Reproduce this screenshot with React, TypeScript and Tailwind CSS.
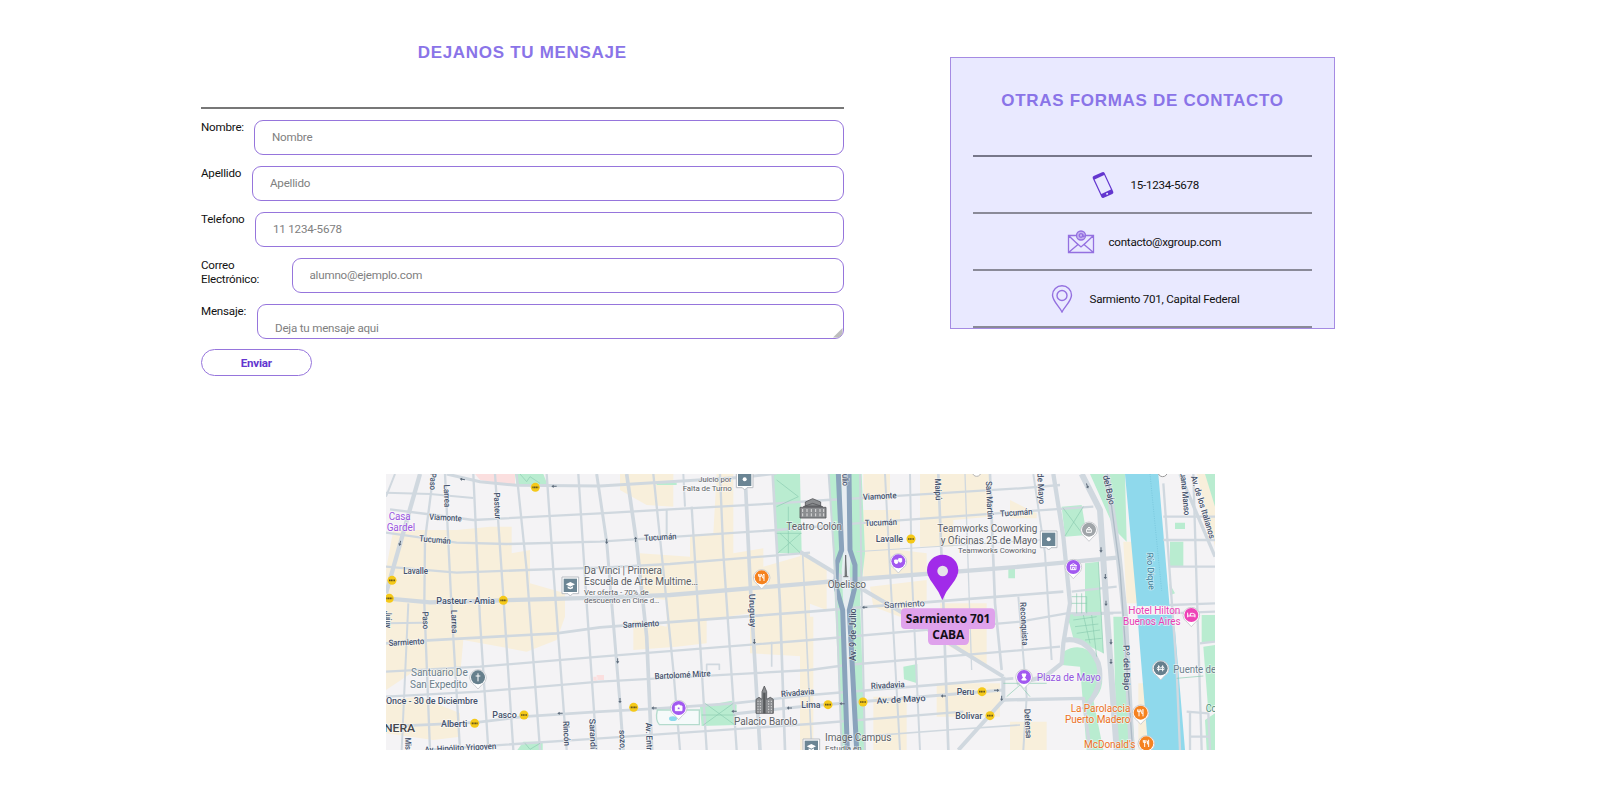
import React from "react";

type Road = [string, number];

const blocks = [
  "M40 180 H230 L330 170 H395 V250 L450 240 V340 L555 370 V440 L530 510 L440 545 L250 510 L240 620 L100 605 L18 660 V300Z",
  "M18 690 L120 680 L240 730 V800 L160 810 L18 790Z",
  "M720 12 H880 V110 L800 105 L720 60Z",
  "M1010 12 H1060 V250 L1150 235 V290 L1290 250 V560 L1110 550 V430 L980 450 V520 L890 530 L760 540 V450 L860 470 V390 L780 380 V250 L930 260 V195 L1000 190Z",
  "M1450 12 H1530 V90 H1450Z M1620 12 H1830 V140 L1720 150 V230 H1620Z",
  "M1450 120 H1560 V240 L1640 250 V310 L1450 325Z",
  "M1260 250 L1340 300 V420 L1260 390Z M1470 350 L1640 330 V390 L1560 440 L1480 410Z",
  "M1680 400 L1820 400 V590 L1690 520Z M1480 680 H1580 V840 H1480Z M1670 640 H1860 V740 H1670Z",
  "M1260 440 H1300 V840 H1260Z M1890 755 H2000 V840 H1890Z M2230 215 H2260 L2275 400 H2240Z M2275 640 H2300 V840 H2275Z",
  "M1890 90 L1970 130 V145 H1890Z M2450 12 H2505 V230Z",
];

const parks = [
  "M405 12 H490 L503 45 L410 48Z",
  "M412 840 L430 815 H488 V840Z",
  "M1180 12 H1260 L1265 250 H1190 L1185 110Z",
  "M960 710 L1055 692 L1070 705 L1068 765 L965 768Z",
  "M1345 12 H1445 L1455 250 L1440 380 L1455 840 H1385 L1365 400 L1360 250Z",
  "M1570 590 L1612 582 V640 L1572 628Z M1885 295 H1905 V325 H1885Z M830 40 L890 38 V45 H830Z",
  "M2045 110 L2105 105 L2120 195 L2055 200Z",
  "M2130 12 H2235 L2240 215 L2205 180 L2165 90Z",
  "M2115 280 L2155 275 L2170 550 L2080 505 L2060 430 H2115Z",
  "M2050 545 Q2110 510 2155 570 Q2185 650 2140 690 L2170 840 H2120 L2100 590 L2045 585Z",
  "M2200 440 H2235 L2250 640 L2265 840 H2210Z",
  "M2370 215 H2410 V290 H2370Z M2385 158 H2415 V177 H2385Z M2368 340 L2385 370 L2370 376Z",
  "M2465 435 H2505 V515 L2465 520Z M2470 530 L2505 525 V705 L2485 725Z M2475 750 L2505 730 V840 H2480Z M2475 12 H2505 V110Z",
];

const roads: Road[] = [
  ["M200 12 L300 35 L410 46 L660 48 L1090 22 L1190 10", 9],
  ["M18 68 L150 72 L280 84", 6],
  ["M30 118 L140 132 L280 150 L660 130 L1190 100 L1340 90 L1430 85 L1920 55 L2040 45", 7],
  ["M18 188 L230 218 L380 222 L660 215 L1190 180 L1430 160 L1920 125 L2140 110", 7],
  ["M18 290 L230 308 L440 300 L660 293 L870 282 L1290 248", 7],
  ["M1430 245 L1900 215 L2010 208", 3],
  ["M18 385 L150 397 L660 383 L870 375 L1290 340 L1400 330 L1920 290 L2220 262", 13],
  ["M18 460 L130 458", 6],
  ["M18 520 L130 512 L530 490 L660 472 L1290 425 L1440 412 L1920 375 L2050 365", 8],
  ["M18 605 L300 590 L660 560 L1290 510 L1920 455 L2060 430 L2225 428", 7],
  ["M18 680 L300 665 L660 635 L1290 600 L1400 585 L1870 545 L2040 530", 7],
  ["M18 770 L290 757 L430 740 L660 725 L840 715 L1060 700 L1290 675 L1900 625", 8],
  ["M1060 732 L1260 710 L1870 660", 9],
  ["M140 840 L660 805 L1290 762 L1750 725", 7],
  ["M1440 800 L1700 780 L1920 765", 5],
  ["M120 12 L18 370", 13],
  ["M45 12 L18 80", 6],
  ["M160 12 L135 210 L133 400 L150 840", 7],
  ["M195 12 L215 420 L240 840", 7],
  ["M280 12 L300 450 L325 840", 7],
  ["M345 12 L370 380 L400 840", 7],
  ["M410 12 L440 300 L480 840", 7],
  ["M500 12 L520 300 L560 840", 7],
  ["M595 12 L620 400 L650 840", 7],
  ["M85 400 L65 840", 6],
  ["M650 12 L680 215 L720 700 L730 840", 9],
  ["M740 12 L770 220 L800 500 L815 840", 11],
  ["M820 12 L850 300 L880 600 L900 840", 7],
  ["M910 12 L915 110 M860 120 V200", 6],
  ["M935 110 L980 840", 7],
  ["M1020 12 L1030 250 L1070 840", 7],
  ["M1095 12 L1110 330 L1140 840", 11],
  ["M1178 12 L1200 400 L1215 840", 8],
  ["M1268 250 L1295 840 M1175 515 V590 M980 605 V583 H1018 V600", 5],
  ["M1515 12 L1530 300 L1560 840", 6],
  ["M1590 12 L1595 300 L1620 840", 6],
  ["M1675 12 L1690 400 L1705 840", 8],
  ["M1755 12 L1775 600", 4],
  ["M1830 12 L1845 400 L1865 600", 8],
  ["M1915 380 L1940 680 L1930 840", 6],
  ["M1960 12 L1995 250 L2015 570", 6],
  ["M1260 245 L1400 330 L1570 430 L1740 540 L1870 620", 12],
  ["M1735 840 L1870 690 L1870 620", 12],
  ["M1870 690 L2110 685 L2130 840", 10],
  ["M2020 12 L2050 200 L2070 400 L2050 520 L2045 580 L1995 620 L1910 640", 13],
  ["M2105 12 L2160 120 L2180 420 L2210 840", 18],
  ["M2055 510 Q2120 500 2155 580 Q2175 650 2110 720", 15],
  ["M2180 12 L2215 250 L2235 440 L2255 840", 18],
  ["M2075 365 L2210 350 M2080 435 L2200 430", 7],
  ["M2350 40 L2390 600 L2400 840 M2440 12 L2450 350 L2465 840", 7],
  ["M2350 140 H2505 M2350 210 H2505 M2370 290 H2505 M2370 405 L2505 400 M2370 430 L2505 425 M2460 520 L2505 515 M2420 725 L2485 730 L2490 840 M2430 725 V840 M2430 800 H2490", 7],
  ["M2400 12 L2505 260", 10],
];

const thinPaths =
  "M420 12 L440 35 L450 20 L480 40 M435 820 L450 838 L480 820 M1190 30 L1255 80 L1190 110 M1190 190 H1265 M1200 190 L1260 248 M1262 190 L1195 248 M1225 110 V250 M2050 115 L2110 195 M2110 110 L2055 198 M2075 380 H2120 V430 M2075 400 H2120 M2090 370 V430 M2105 370 V430 M2080 450 L2150 440 M2085 470 L2155 462 M2090 490 L2160 480 M2115 510 L2165 505 M2110 435 L2130 520 M2135 435 L2150 560 M2155 275 L2170 550 M975 700 L1065 765 M1060 700 L970 765 M965 735 H1065 M1870 640 H2000 M1880 680 L1920 645 L1950 680 M2390 625 L2470 618";

type Label = { t: string; x: number; y: number; w: number; s?: number; c?: string; r?: number; b?: number };
const street = "#45526c";
const place = "#5d6166";
const slate = "#6b7f8c";

const labels: Label[] = [
  { t: "Casa", x: 26, y: 149, w: 66, s: 30, c: "#9a55e0" },
  { t: "Gardel", x: 20, y: 183, w: 85, s: 30, c: "#9a55e0" },
  { t: "Viamonte", x: 147, y: 149, w: 98, r: 3, b: 500 },
  { t: "Tucumán", x: 117, y: 214, w: 95, r: 5, b: 500 },
  { t: "Lavalle", x: 70, y: 313, w: 74, b: 500 },
  { t: "Pasteur - Amia", x: 169, y: 401, w: 175, s: 28, b: 500 },
  { t: "Sarmiento", x: 26, y: 528, w: 107, r: -3, b: 500 },
  { t: "Santuario De", x: 93, y: 618, w: 170, s: 30, c: slate },
  { t: "San Expedito", x: 90, y: 653, w: 172, s: 30, c: slate },
  { t: "Once - 30 de Diciembre", x: 18, y: 703, w: 275, s: 28, b: 500 },
  { t: "Pasco", x: 337, y: 745, w: 73, s: 28, b: 500 },
  { t: "Alberti", x: 183, y: 770, w: 79, s: 28, b: 500 },
  { t: "NERA", x: 12, y: 785, w: 93, s: 30, c: "#45474b", b: 500 },
  { t: "Av. Hipólito Yrigoyen", x: 134, y: 848, w: 215, r: -3, b: 500 },
  { t: "Paso", x: 151, y: 8, w: 52, r: 92, b: 500 },
  { t: "Larrea", x: 191, y: 44, w: 68, r: 88, b: 500 },
  { t: "Pasteur", x: 341, y: 68, w: 80, r: 87, b: 500 },
  { t: "Paso", x: 127, y: 425, w: 53, r: 88, b: 500 },
  { t: "Larrea", x: 213, y: 420, w: 70, r: 88, b: 500 },
  { t: "Jujuy", x: 15, y: 422, w: 52, r: 90, b: 500 },
  { t: "Misiones", x: 75, y: 803, w: 90, r: 88, b: 500 },
  { t: "Rincón", x: 549, y: 754, w: 74, r: 87, b: 500 },
  { t: "Sarandí", x: 628, y: 746, w: 92, r: 88, b: 500 },
  { t: "Da Vinci | Primera", x: 612, y: 311, w: 234, s: 30, c: place },
  { t: "Escuela de Arte Multime…", x: 612, y: 346, w: 342, s: 30, c: place },
  { t: "Ver oferta - 70% de", x: 612, y: 374, w: 194, s: 24, c: place },
  { t: "descuento en Cine d…", x: 612, y: 400, w: 226, s: 24, c: place },
  { t: "Juicio por", x: 955, y: 36, w: 100, s: 24, c: place },
  { t: "Falta de Turno", x: 908, y: 63, w: 147, s: 24, c: place },
  { t: "Tucumán", x: 793, y: 213, w: 97, r: -3, b: 500 },
  { t: "Sarmiento", x: 729, y: 474, w: 109, r: -3, b: 500 },
  { t: "Bartolomé Mitre", x: 824, y: 628, w: 168, r: -3, b: 500 },
  { t: "Uruguay", x: 1107, y: 372, w: 100, r: 88, b: 500 },
  { t: "Rivadavia", x: 1204, y: 681, w: 100, r: -5, b: 500 },
  { t: "Palacio Barolo", x: 1062, y: 765, w: 190, s: 30, c: place },
  { t: "Lima", x: 1264, y: 714, w: 57, s: 28, b: 500 },
  { t: "sozo,", x: 718, y: 780, w: 60, r: 88, b: 500 },
  { t: "Av. Entre Ríos", x: 797, y: 758, w: 150, r: 88, b: 500 },
  { t: "Teatro Colón", x: 1219, y: 179, w: 167, s: 30, c: place },
  { t: "Obelisco", x: 1343, y: 355, w: 115, s: 30, c: place },
  { t: "Julio", x: 1386, y: 0, w: 48, r: 88, b: 500 },
  { t: "Av. 9 de Julio", x: 1428, y: 573, w: 158, r: -90, s: 26, b: 500 },
  { t: "Viamonte", x: 1449, y: 90, w: 101, r: -3, b: 500 },
  { t: "Tucumán", x: 1455, y: 168, w: 96, r: -2, b: 500 },
  { t: "Lavalle", x: 1487, y: 216, w: 82, s: 28, b: 500 },
  { t: "Sarmiento", x: 1513, y: 415, w: 122, r: -3, s: 27 },
  { t: "Maipú", x: 1664, y: 26, w: 65, r: 87, b: 500 },
  { t: "San Martín", x: 1817, y: 34, w: 114, r: 87, b: 500 },
  { t: "Tucumán", x: 1861, y: 140, w: 97, r: -4, b: 500 },
  { t: "25 de Mayo", x: 1970, y: -25, w: 128, r: 87, b: 500 },
  { t: "Teamworks Coworking", x: 1672, y: 187, w: 300, s: 30, c: place },
  { t: "y Oficinas 25 de Mayo", x: 1682, y: 222, w: 290, s: 30, c: place },
  { t: "Teamworks Coworking", x: 1734, y: 250, w: 234, s: 24, c: place },
  { t: "Rivadavia", x: 1473, y: 657, w: 101, r: -3, b: 500 },
  { t: "Av. de Mayo", x: 1490, y: 701, w: 147, r: -3, s: 26, b: 500 },
  { t: "Peru", x: 1730, y: 675, w: 53, s: 28, b: 500 },
  { t: "Bolivar", x: 1726, y: 746, w: 81, s: 28, b: 500 },
  { t: "Image Campus", x: 1335, y: 813, w: 199, s: 30, c: place },
  { t: "Estudia en", x: 1335, y: 842, w: 110, s: 24, c: place },
  { t: "Reconquista", x: 1920, y: 397, w: 130, r: 87, b: 500 },
  { t: "Defensa", x: 1933, y: 717, w: 88, r: 87, b: 500 },
  { t: "del Bajo", x: 2168, y: 18, w: 90, r: 77, s: 26, b: 500 },
  { t: "P.º del Bajo", x: 2230, y: 525, w: 136, r: 89, s: 26, b: 500 },
  { t: "Juana Manso", x: 2400, y: -5, w: 142, r: 85, b: 500 },
  { t: "Av. de los Italianos", x: 2432, y: 20, w: 196, r: 73, b: 500 },
  { t: "Río Dique", x: 2300, y: 248, w: 112, r: 87, s: 27, c: "#2d7391" },
  { t: "Hotel Hilton", x: 2245, y: 432, w: 156, s: 30, c: "#e83fb5" },
  { t: "Buenos Aires", x: 2229, y: 466, w: 173, s: 30, c: "#e83fb5" },
  { t: "Plaza de Mayo", x: 1970, y: 634, w: 192, s: 30, c: "#9457e0" },
  { t: "La Parolaccia", x: 2072, y: 725, w: 179, s: 30, c: "#ec711e" },
  { t: "Puerto Madero", x: 2055, y: 758, w: 196, s: 30, c: "#ec711e" },
  { t: "McDonald's", x: 2112, y: 833, w: 154, s: 30, c: "#ec711e" },
  { t: "Puente de", x: 2380, y: 608, w: 128, s: 30, c: slate },
  { t: "Co", x: 2477, y: 726, w: 33, s: 30, c: "#4d8f7a" },
];

const stations = [
  [466, 52], [36, 331], [28, 385], [370, 391], [432, 735], [284, 760], [761, 712],
  [1344, 704], [1449, 696], [1593, 207], [1806, 665], [1830, 737],
];

const arrows: [number, number, number][] = [
  [247, 28, 10], [522, 49, 0], [60, 220, -75], [540, 730, 0], [680, 214, -90], [767, 208, 90], [713, 573, -90],
  [720, 692, -90], [822, 714, 0], [1062, 724, 0], [1228, 714, 0], [1123, 515, -90], [1454, 412, 0], [1386, 701, 0],
  [1690, 678, 0], [1850, 661, 180], [1865, 685, -90], [2122, 48, -110], [2163, 240, -90], [2176, 320, -90], [2178, 400, -90],
  [2193, 516, -90], [2193, 575, -90],
];

type Kind = "food" | "camera" | "mask" | "museum" | "bed" | "bridge" | "cross" | "statue" | "lock";
const pins: [number, number, string, Kind][] = [
  [1145, 322, "#f58220", "food"],
  [2282, 728, "#f58220", "food"],
  [2299, 820, "#f58220", "food"],
  [896, 714, "#a259f0", "camera"],
  [1555, 274, "#a259f0", "mask"],
  [2080, 291, "#a259f0", "museum"],
  [1932, 621, "#a259f0", "statue"],
  [2434, 435, "#ee43b7", "bed"],
  [2342, 595, "#667f8c", "bridge"],
  [294, 622, "#667f8c", "cross"],
  [2127, 179, "#a0a5a9", "lock"],
];

const glyphs: Record<Kind, React.ReactNode> = {
  food: <path d="M-9 -10 V-3 H-1 V-10 M-5 -10 V11 M7 11 V-10 Q2 -9 3 2 H7" />,
  camera: <path fill="#fff" fillRule="evenodd" d="M-10 -6 H-5 L-3 -9 H3 L5 -6 H10 V8 H-10Z M0 -3 A4 4 0 1 0 .1 -3Z" />,
  mask: <path fill="#fff" d="M-11 -4 H-2 V5 Q-7 9 -11 4Z M1 -8 H10 V1 Q6 5 1 0Z" />,
  museum: <path d="M-10 -4 L0 -10 L10 -4Z M-8 -2 V8 H8 V-2 M-3 8 V1 H3 V8" />,
  bed: <path d="M-11 -7 V7 M-11 3 H11 V-2 L4 -5 H-3 V3 M11 3 V7 M-7 -2 V-1" />,
  bridge: <path d="M-6 -9 V9 M6 -9 V9 M-11 3 H11 M-6 -6 Q0 3 6 -6 M-11 0 L-6 -6 M11 0 L6 -6" />,
  cross: <path d="M0 -12 V12 M-7 -4 H7" />,
  statue: <path fill="#fff" d="M-6 -9 H6 L2 2 L7 9 H-7 L-2 2Z" />,
  lock: <path d="M-7 -1 H7 V8 H-7Z M-5 -2 L0 -8 L5 -2 M0 2 V5" />,
};

function CityMap() {
  return (
    <svg viewBox="18 12 2487 828" className="block h-[276px] w-[829px] font-[Roboto,sans-serif]" preserveAspectRatio="none">
      <rect x="0" y="0" width="2520" height="860" fill="#f4f3f5" />
      {blocks.map((d) => <path key={d} d={d} fill="#f8efdb" />)}
      <path d="M285 12 H405 V46 L300 30Z" fill="#fbdfdf" />
      <path d="M650 615 H672 V630 H650Z M652 620 H640 V632 H652Z" fill="#fbdfdf" />
      {parks.map((d) => <path key={d} d={d} fill="#b9ecd0" />)}
      <path d="M2235 12 H2335 L2368 400 L2385 480 L2415 840 H2305 L2278 510 L2270 400Z" fill="#8fd9ec" />
      <path d="M2272 408 H2505 V430 L2372 434 H2272Z" fill="#f4f3f5" />
      <path d="M2310 12 L2345 362" stroke="#70bfd6" strokeWidth="2" strokeDasharray="3 4" fill="none" />
      {roads.map(([d, w]) => (
        <path key={d} d={d} stroke="#d0d8df" strokeWidth={w} fill="none" strokeLinejoin="round" />
      ))}
      <path d={thinPaths} stroke="#8bcbb0" strokeWidth="2" fill="none" />
      <path d="M832 720 H958 V764 H838 Q825 750 832 720Z" fill="#f5fafa" stroke="#b4dbcd" strokeWidth="4" />
      <ellipse cx="879" cy="746" rx="12" ry="7" fill="#8fd9ec" />
      <g fill="none" strokeLinejoin="round">
        <path d="M1395 12 L1402 245 L1397 300 L1402 400 L1412 840" stroke="#e7edf1" strokeWidth="24" />
        <path d="M1375 12 L1385 240 L1370 280 L1368 350 L1388 420 L1402 840" stroke="#8aa3bc" strokeWidth="15" />
        <path d="M1407 12 L1410 240 L1425 285 L1425 350 L1408 420 L1430 840" stroke="#8aa3bc" strokeWidth="15" />
        <path d="M1346 12 L1362 250 L1370 420 L1385 840 M1440 12 L1445 380 L1455 840" stroke="#cdd6dd" strokeWidth="6" />
        <path d="M2182 12 L2220 300 L2258 840" stroke="#aebbc6" strokeWidth="4" />
      </g>
      {arrows.map(([x, y, r]) => (
        <path key={`${x}-${y}`} transform={`translate(${x} ${y}) rotate(${r})`} d="M-8 0 L-1 -5 V-1.500 H8 V1.500 H-1 V5Z" fill="#5b6979" />
      ))}
      {labels.map((l, i) => (
        <text
          key={i}
          x={l.x}
          y={l.y}
          transform={l.r ? `rotate(${l.r} ${l.x} ${l.y})` : undefined}
          textLength={l.w}
          lengthAdjust="spacingAndGlyphs"
          fontSize={l.s ?? 26}
          fontWeight={l.b ?? 400}
          fill={l.c ?? street}
          stroke="#ffffff"
          strokeOpacity="0.6"
          strokeWidth="4"
          paintOrder="stroke"
        >
          {l.t}
        </text>
      ))}
      {stations.map(([x, y]) => (
        <g key={`${x}-${y}`}>
          <circle cx={x} cy={y} r="13.500" fill="#f5c919" />
          <path d={`M${x - 9} ${y} H${x + 9}`} stroke="#67571c" strokeWidth="5" strokeDasharray="4 1" />
        </g>
      ))}
      {pins.map(([x, y, c, kind]) => (
        <g key={`${x}-${y}`} transform={`translate(${x} ${y})`}>
          <path d="M-25 2 A25 25 0 1 1 25 2 Q25 14 12 22 L0 35 L-12 22 Q-25 14 -25 2Z" fill="#fff" stroke="#c3c5ca" strokeWidth="2.500" />
          <circle r="21" fill={c} />
          <g fill="none" stroke="#fff" strokeWidth="3">{glyphs[kind]}</g>
        </g>
      ))}
      {[[571, 346], [1094, 28], [2006, 208], [1294, 832]].map(([x, y], i) => (
        <g key={x} transform={`translate(${x} ${y})`}>
          <path d="M-25 -25 H25 V25 H7 L0 32 L-7 25 H-25Z" fill="#fff" stroke="#b9bdc3" strokeWidth="3" />
          <rect x="-20" y="-20" width="40" height="40" fill="#6b8594" />
          {i % 3 === 0 ? <path d="M-14 -3 L0 -10 L14 -3 L0 4Z M-8 3 L0 7 L8 3 V9 L0 12 L-8 9Z" fill="#fff" /> : <circle r="6" fill="#fff" />}
        </g>
      ))}
      <circle cx="1790" cy="6" r="13" fill="#fff" stroke="#b5b5b5" strokeWidth="3" />
      <circle cx="2348" cy="6" r="14" fill="#fff" stroke="#999" strokeWidth="3" />
      <g fill="#8b8d90" stroke="#55575a" strokeWidth="2.500">
        <path d="M1276 96 L1298 86 L1322 96 V108 H1276Z M1270 110 L1298 100 L1328 110Z M1260 112 H1338 V144 H1260Z" />
        <path d="M1268 117 V142 M1281 117 V142 M1294 117 V142 M1307 117 V142 M1320 117 V142 M1331 117 V142" stroke="#ececec" strokeDasharray="9 4" />
        <path d="M1128 688 L1137 682 L1146 688 V665 L1153 648 L1160 665 V688 L1171 682 L1180 688 V730 H1128Z" />
        <path d="M1134 692 V728 M1141 692 V728 M1166 692 V728 M1174 692 V728" stroke="#ececec" strokeDasharray="4 4" />
        <path d="M1153 668 V730" strokeWidth="7" />
        <path d="M1395 318 L1397 255 L1400 318Z" strokeWidth="2" />
        <path d="M1390 320 H1405" />
      </g>
      <path d="M1687 390 Q1677 365 1658 340 Q1641 318 1641 301 A46 46 0 0 1 1735 301 Q1735 318 1718 340 Q1697 365 1687 390Z" fill="#a12be9" />
      <circle cx="1688" cy="303" r="16" fill="#e6e4ea" />
      <path d="M1576 415 H1832 Q1845 415 1845 428 V464 Q1845 477 1832 477 H1767 V511 Q1767 525 1753 525 H1658 Q1644 525 1644 511 V477 H1576 Q1563 477 1563 464 V428 Q1563 415 1576 415Z" fill="#dfa2ec" />
      <g className="font-['Open_Sans',sans-serif]" fontWeight="700" fontSize="35" fill="#141018">
        <text x="1577" y="459" textLength="254" lengthAdjust="spacingAndGlyphs">Sarmiento 701</text>
        <text x="1657" y="507" textLength="96" lengthAdjust="spacingAndGlyphs">CABA</text>
      </g>
    </svg>
  );
}

const fieldBox =
  "block h-[35px] min-w-0 flex-1 rounded-[9px] border border-[#9675dc] bg-white px-[17px] text-[11.6px] tracking-[-0.2px] text-black outline-none placeholder:text-[#808080]";

const fields = [
  { id: "nombre", label: "Nombre:", hint: "Nombre", width: "w-[53px]" },
  { id: "apellido", label: "Apellido", hint: "Apellido", width: "w-[51px]" },
  { id: "telefono", label: "Telefono", hint: "11 1234-5678", width: "w-[54px]" },
  { id: "correo", label: "Correo Electrónico:", hint: "alumno@ejemplo.com", width: "w-[90.5px] pr-[25px]" },
];

function PhoneIcon() {
  return (
    <svg className="h-[28px] w-[28px]" viewBox="0 0 28 28">
      <g transform="rotate(-25 14 14)">
        <rect x="7.500" y="2" width="13" height="24" rx="1.800" fill="#6336cf" />
        <rect x="8.700" y="5.500" width="10.600" height="16" fill="#e9e9ff" />
        <circle cx="14" cy="23.700" r="1" fill="#e9e9ff" />
      </g>
    </svg>
  );
}

function MailIcon() {
  return (
    <svg className="h-[24px] w-[28px]" viewBox="0 0 28 24" fill="none" stroke="#9470e0" strokeWidth="1.300">
      <path d="M9 5.500 H1.500 V22.500 H26.500 V5.500 H19 M1.500 5.500 L11 14.500 M26.500 5.500 L17 14.500 M1.500 22.500 L11 14.500 M17 14.500 L26.500 22.500 M9.500 13 L14 17 L18.500 13" />
      <circle cx="14" cy="5.500" r="4.500" fill="#c5b2f1" />
      <circle cx="14" cy="5.500" r="1.800" />
      <path d="M15.800 4 V6 Q16.800 7.500 17.500 5.500" />
    </svg>
  );
}

function PlaceIcon() {
  return (
    <svg className="h-[28px] w-[22px]" viewBox="0 0 22 28" fill="none" stroke="#9470e0" strokeWidth="1.400">
      <path d="M11 27 C8 21 1.500 16 1.500 10 A9.500 9.200 0 0 1 20.500 10 C20.500 16 14 21 11 27Z" />
      <circle cx="11" cy="10.500" r="5" />
    </svg>
  );
}

const contacts = [
  { icon: <PhoneIcon />, text: "15-1234-5678", place: "pl-[115.5px]", gap: "gap-[14px]" },
  { icon: <MailIcon />, text: "contacto@xgroup.com", place: "pl-[93.5px]", gap: "gap-[14px]" },
  { icon: <PlaceIcon />, text: "Sarmiento 701, Capital Federal", place: "pl-[77.5px]", gap: "gap-[17px]" },
];

const heading =
  "font-['Liberation_Sans',Arial,sans-serif] text-[17px] leading-[20px] font-bold whitespace-nowrap text-center tracking-[0.7px] text-[#8a74e8]";

export default function App() {
  return (
    <main className="h-[798px] w-[1600px] overflow-hidden bg-white font-[Roboto,sans-serif] text-[11.6px] leading-[14px] tracking-[-0.2px] text-[#111]">
      <div className="flex h-[474px] pl-[201px]">
        <form className="w-[642.5px] pt-[43px]" onSubmit={(e) => e.preventDefault()}>
          <h2 className={heading}>DEJANOS TU MENSAJE</h2>
          <div className="mt-[44px] h-[2px] bg-[#777]" />
          <div className="mt-[11px] flex flex-col gap-[11px]">
            {fields.map((f) => (
              <div key={f.id} className="flex h-[35px] items-start">
                <label htmlFor={f.id} className={`${f.width} shrink-0`}>{f.label}</label>
                <input id={f.id} placeholder={f.hint} className={`${fieldBox} pb-[1px]`} />
              </div>
            ))}
            <div className="relative flex h-[35px] items-start">
              <label htmlFor="mensaje" className="w-[56px] shrink-0">Mensaje:</label>
              <textarea id="mensaje" placeholder="Deja tu mensaje aqui" className={`${fieldBox} resize-none overflow-hidden pt-[16px]`} />
              <svg className="absolute right-[1px] bottom-[1px] h-[10px] w-[10px]" viewBox="0 0 10 10">
                <path d="M9.500 0 V4 Q9 8.500 5 9.500 H0Z" fill="#bdbdbd" />
              </svg>
            </div>
          </div>
          <button className="mt-[10px] h-[27px] w-[110.5px] rounded-full border border-[#9675dc] font-bold text-[#6336cf]">Enviar</button>
        </form>
        <aside className="mt-[57px] ml-[106.5px] h-[272px] w-[385px] border border-[#a58be3] bg-[#e9e9ff] px-[22px] pt-[33px] tracking-[-0.25px]">
          <h2 className={heading}>OTRAS FORMAS DE CONTACTO</h2>
          <div className="mt-[44px] h-[2px] bg-[#77778a]" />
          {contacts.map((c) => (
            <div key={c.text} className={`flex h-[57px] items-center border-b-2 border-[#8a8a98] ${c.place} ${c.gap}`}>
              {c.icon}
              <span className="whitespace-nowrap">{c.text}</span>
            </div>
          ))}
        </aside>
      </div>
      <div className="ml-[386px] w-[829px] overflow-hidden">
        <CityMap />
      </div>
    </main>
  );
}
